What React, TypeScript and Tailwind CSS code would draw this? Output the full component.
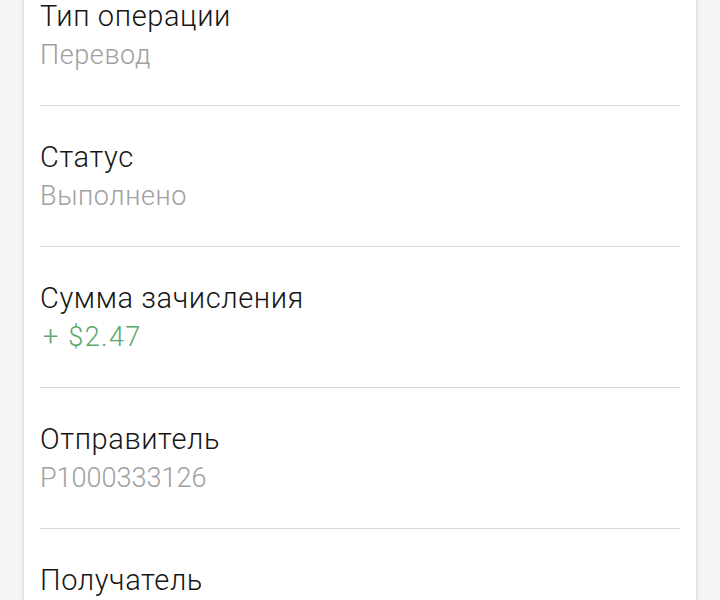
import React from "react";

const rows = [
  { label: "Тип операции", value: "Перевод" },
  { label: "Статус", value: "Выполнено" },
  { label: "Сумма зачисления", value: "$2.47", amount: true },
  { label: "Отправитель", value: "P1000333126", code: true },
  { label: "Получатель", value: "U1234567", code: true },
];

const App = () => {
  return (
    <div
      className="h-[600px] overflow-hidden bg-[#f5f5f5] px-6"
      style={{ fontFamily: "Roboto, 'Noto Sans', sans-serif" }}
    >
      <div className="min-h-full bg-white px-4 shadow-[0_0_4px_rgba(0,0,0,0.18)]">
        <div className="-mt-[3px]">
          {rows.map((row, i) => (
            <div key={row.label}>
              {i > 0 && <div className="h-px bg-[#d9d9d9]" />}
              <div className={i > 0 ? "pt-[32px] pb-[31px]" : "pb-[31px]"}>
                <p className="text-[29px] font-light leading-[39px] tracking-[0.6px] text-[#161616]">
                  {row.label}
                </p>
                {row.amount ? (
                  <p className="flex text-[27px] font-light leading-[38px] text-[#5aa96b]">
                    <span className="px-[3px]">+</span>
                    <span className="ml-[7px] tracking-[1.4px]">{row.value}</span>
                  </p>
                ) : (
                  <p
                    className={
                      row.code
                        ? "text-[27px] font-light leading-[38px] text-[#a0a0a0]"
                        : "text-[27px] font-light leading-[38px] tracking-[0.6px] text-[#a0a0a0]"
                    }
                  >
                    {row.value}
                  </p>
                )}
              </div>
            </div>
          ))}
        </div>
      </div>
    </div>
  );
};

export default App;
